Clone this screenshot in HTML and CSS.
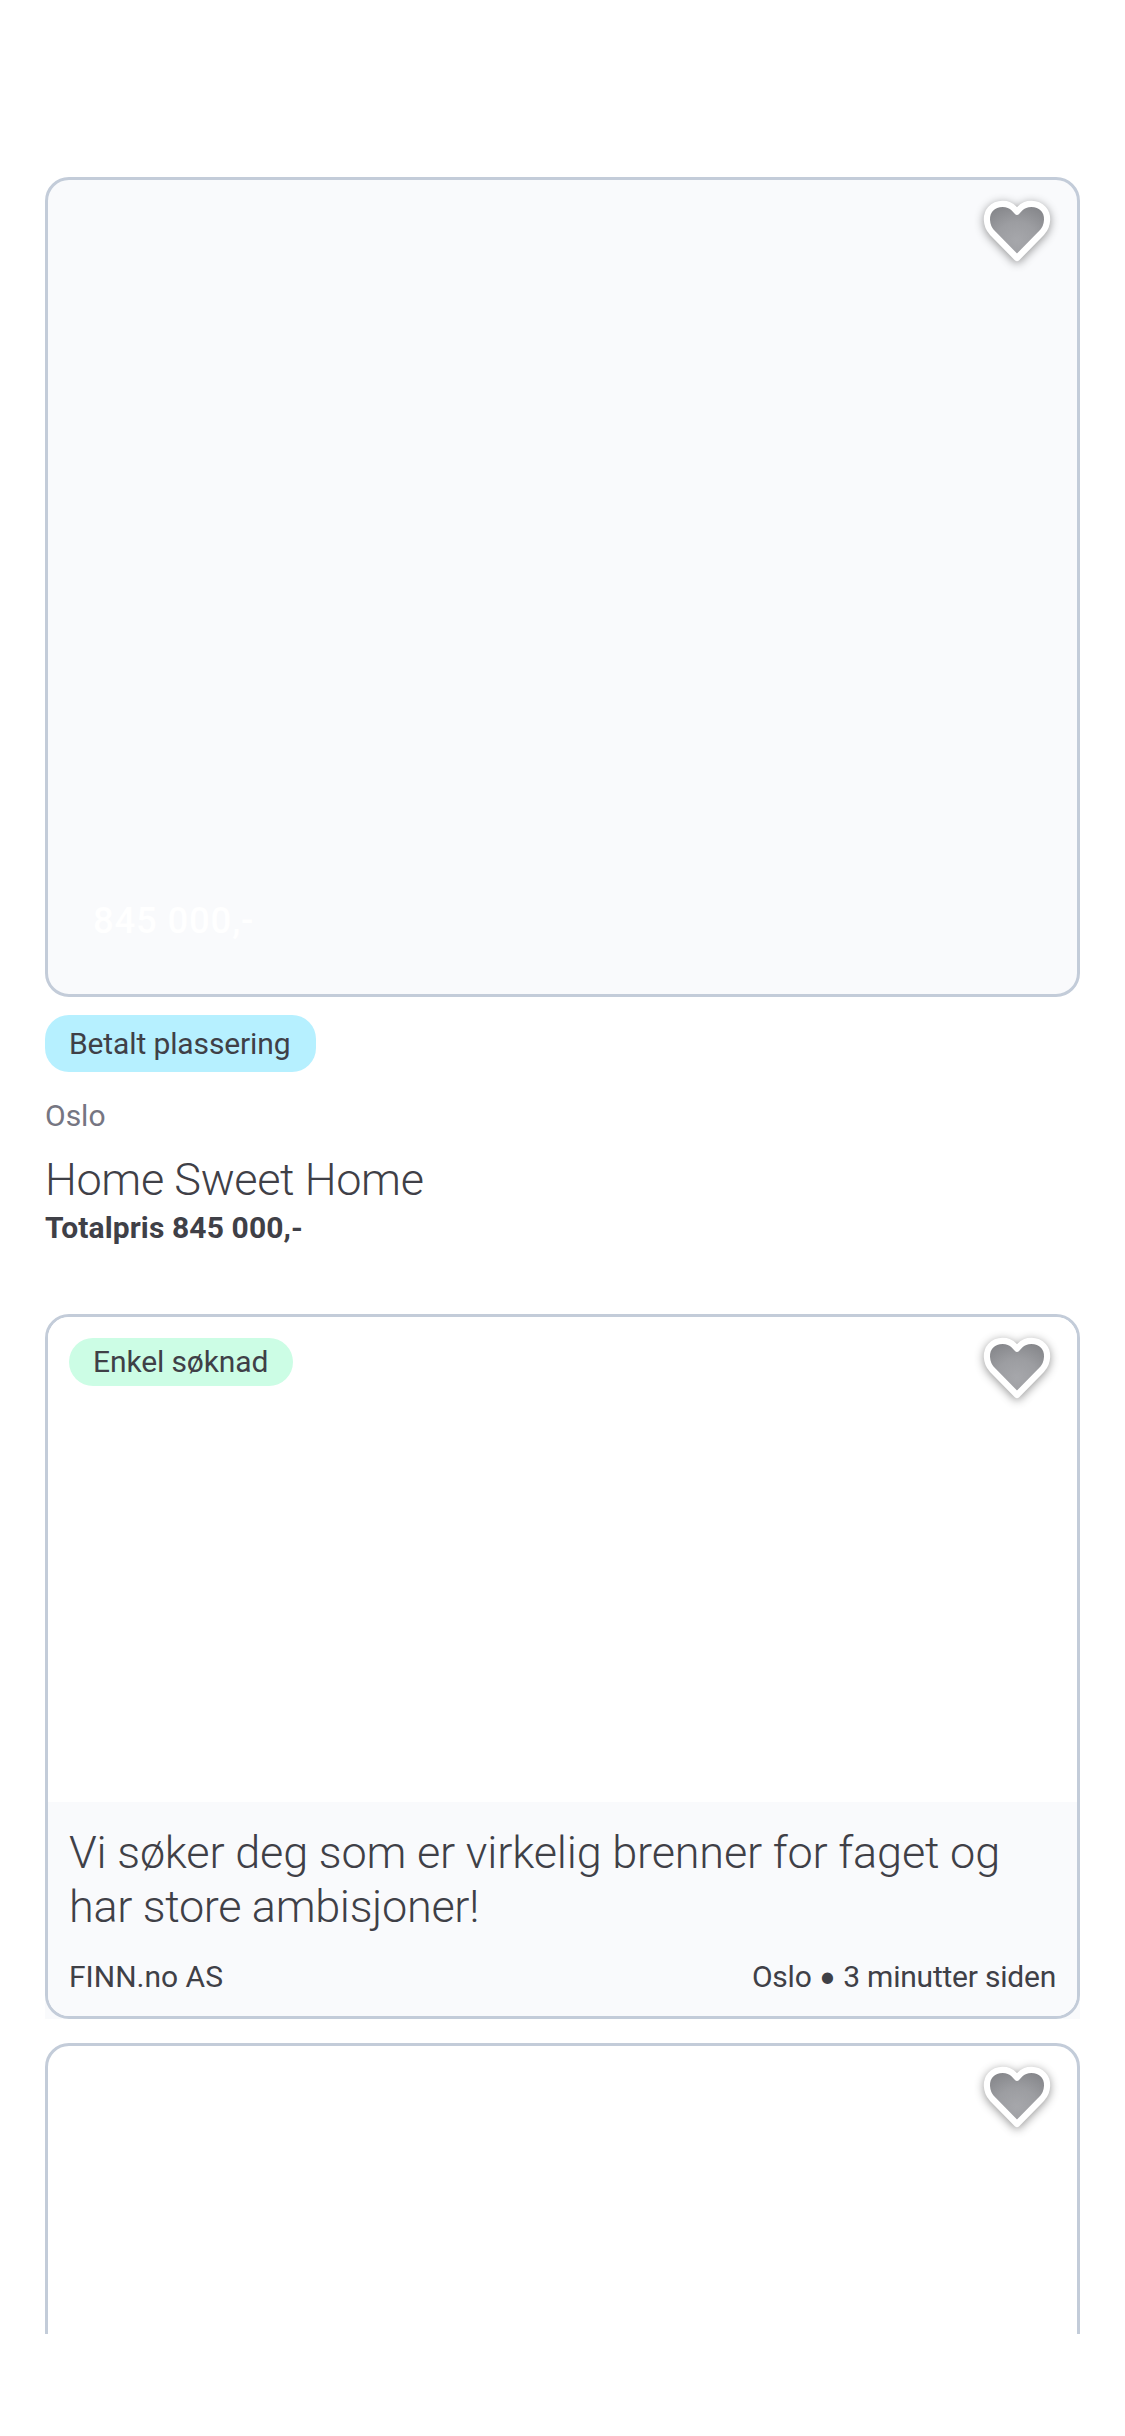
FILE: index.html
```
<!DOCTYPE html>
<html lang="no">
<head>
<meta charset="utf-8">
<title>Annonser</title>
<link rel="stylesheet" href="styles.css">
</head>
<body>
<svg class="defs" width="0" height="0">
  <defs>
    <radialGradient id="heart-fill" cx=".5" cy=".68" r=".7">
      <stop offset="0" stop-color="#a6a7ab"/>
      <stop offset=".5" stop-color="#9c9da1"/>
      <stop offset="1" stop-color="#85868a"/>
    </radialGradient>
    <symbol id="heart" viewBox="0 0 72 66">
      <path d="M36 61 L11 35.5 C4.500 28.500 4.500 17.500 9.500 12 C16 5 27.500 5.500 33 11.500 L36 14.700 L39 11.500 C44.500 5.500 56 5 62.500 12 C67.500 17.500 67.500 28.500 61 35.500 Z" fill="url(#heart-fill)" stroke="#fff" stroke-width="6.200" stroke-linejoin="round"/>
    </symbol>
  </defs>
</svg>
<main class="feed">
  <article class="ad">
    <div class="card ad-image">
      <button class="favorite" aria-label="Favoritt"><svg><use href="#heart"/></svg></button>
      <span class="price">845 000,-</span>
    </div>
    <span class="badge sponsored">Betalt plassering</span>
    <p class="location">Oslo</p>
    <h2 class="title">Home Sweet Home</h2>
    <p class="total">Totalpris 845 000,-</p>
  </article>
  <div class="job-wrap">
    <article class="card job">
      <div class="job-image">
        <span class="badge easy">Enkel søknad</span>
        <button class="favorite" aria-label="Favoritt"><svg><use href="#heart"/></svg></button>
      </div>
      <div class="job-body">
        <h2 class="title">Vi søker deg som er virkelig brenner for faget og<br><span class="tight">har store ambisjoner!</span></h2>
        <div class="meta"><span>FINN.no AS</span><span class="when">Oslo <span class="dot">•</span> 3 minutter siden</span></div>
      </div>
    </article>
  </div>
  <article class="card next">
    <button class="favorite" aria-label="Favoritt"><svg><use href="#heart"/></svg></button>
  </article>
</main>
</body>
</html>
```
FILE: styles.css
```
* { box-sizing: border-box; margin: 0; padding: 0; }
body {
  background: #fff;
  color: #3f4047;
  font: 400 30px/36px Roboto, "Liberation Sans", sans-serif;
}
.defs { display: block; }
.feed {
  height: 2334px;
  padding: 177px 45px 0;
  overflow: hidden;
}
.card {
  position: relative;
  border: 3px solid #c3ccd9;
  border-radius: 24px;
}
.favorite {
  position: absolute;
  top: 17px;
  right: 24px;
  width: 72px;
  height: 66px;
  border: 0;
  background: none;
}
.favorite svg {
  display: block;
  width: 72px;
  height: 66px;
  overflow: visible;
  filter: drop-shadow(0 2px 5px rgba(0, 0, 0, .42));
}
.ad { display: flex; flex-direction: column; align-items: flex-start; height: 1137px; }
.ad-image {
  display: flex;
  align-items: flex-end;
  width: 100%;
  height: 820px;
  padding: 0 45px 52px;
  background: #f9fafc;
}
.price {
  color: #fff;
  font-size: 36.5px;
  font-weight: 500;
  line-height: 42px;
  letter-spacing: .8px;
}
.badge { padding: 0 24px; border-radius: 24px; white-space: nowrap; letter-spacing: -.12px; }
.sponsored { width: 271px; margin-top: 18px; line-height: 57px; background: #b6f0ff; }
.location { margin-top: 26px; color: #767682; }
.title { font-size: 45px; line-height: 54px; font-weight: 300; letter-spacing: -.17px; }
.ad .title { margin-top: 19px; letter-spacing: -.37px; }
.tight { letter-spacing: -.32px; }
.total { margin-top: 3px; font-weight: 700; letter-spacing: .12px; }
.job-wrap { background: linear-gradient(#fff 680px, #f9fafc 680px); }
.job { height: 705px; }
.job-image {
  display: flex;
  align-items: flex-start;
  height: 485px;
  padding: 21px;
  border-radius: 21px 21px 0 0;
  background: #fff;
}
.easy { width: 224px; line-height: 48px; background: #ccfde5; }
.job-body {
  display: flex;
  flex-direction: column;
  gap: 25px;
  height: 214px;
  padding: 24px 21px 21px;
  border-radius: 0 0 21px 21px;
  background: #f9fafc;
}
.meta { display: flex; justify-content: space-between; }
.when { letter-spacing: -.22px; }
.dot { font-family: Lato, sans-serif; line-height: 1; }
.next { height: 705px; margin-top: 24px; }
```
